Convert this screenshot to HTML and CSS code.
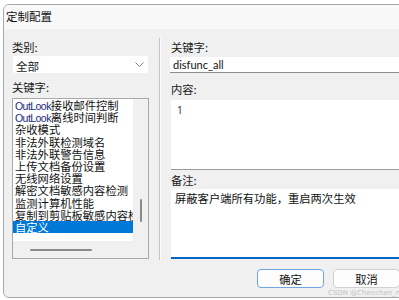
FILE: index.html
```html
<!DOCTYPE html>
<html lang="zh-CN">
<head>
<meta charset="utf-8">
<title>定制配置</title>
<link rel="stylesheet" href="styles.css">
</head>
<body>
<div class="window">
  <div class="titlebar">定制配置</div>
  <div class="main">
    <div class="left">
      <div class="label lbl-type">类别:</div>
      <div class="combo">
        <span>全部</span>
        <svg class="chev" width="9" height="5" viewBox="0 0 9 5"><path d="M0.5 0.5 L4.5 4.5 L8.5 0.5" fill="none" stroke="#7a7a7a" stroke-width="1"/></svg>
      </div>
      <div class="label lbl-key">关键字:</div>
      <div class="listbox">
        <div class="list-row">
          <ul class="items">
            <li><span class="lat">OutLook</span>接收邮件控制</li>
            <li><span class="lat">OutLook</span>离线时间判断</li>
            <li>杂收模式</li>
            <li>非法外联检测域名</li>
            <li>非法外联警告信息</li>
            <li>上传文档备份设置</li>
            <li>无线网络设置</li>
            <li>解密文档敏感内容检测</li>
            <li>监测计算机性能</li>
            <li>复制到剪贴板敏感内容检测</li>
            <li class="sel">自定义</li>
          </ul>
          <div class="vscroll"><div class="vthumb"></div></div>
        </div>
        <div class="hscroll"><div class="hthumb"></div></div>
      </div>
    </div>
    <div class="divider"></div>
    <div class="right">
      <div class="label lbl-type">关键字:</div>
      <div class="input">disfunc_all</div>
      <div class="label lbl-content">内容:</div>
      <div class="textarea content-box">1</div>
      <div class="label lbl-note">备注:</div>
      <div class="textarea note-box">屏蔽客户端所有功能，重启两次生效</div>
    </div>
  </div>
  <div class="buttons">
    <div class="btn default">确定</div>
    <div class="btn">取消</div>
  </div>
  <div class="watermark">CSDN @Chenchen_n</div>
</div>
</body>
</html>
```
FILE: styles.css
```css
html, body {
  margin: 0;
  padding: 0;
  background: #ffffff;
  overflow: hidden;
  width: 399px;
  height: 300px;
}
body {
  font-family: "Noto Sans", "Noto Sans CJK SC", sans-serif;
  font-size: 11.3px;
  color: #1a1a1a;
}
.window {
  position: relative;
  margin: 4px 0 0 3px;
  width: 430px;
  height: 294px;
  border: 1px solid #a8a8a8;
  border-radius: 6px 0 0 6px;
  background: #f0f0f0;
  box-sizing: border-box;
  overflow: hidden;
}
.titlebar {
  height: 24px;
  line-height: 22px;
  padding-left: 2px;
  background: #f8f8f8;
  color: #111;
  font-family: "Noto Sans CJK SC", sans-serif;
  font-size: 11.5px;
}
.main {
  display: flex;
  padding-left: 8px;
  height: 232px;
}
.left {
  width: 137px;
  display: flex;
  flex-direction: column;
}
.label {
  height: 14px;
  line-height: 14px;
  font-family: "Noto Sans CJK SC", sans-serif;
}
.lbl-type { margin-top: 11px; }
.combo {
  margin-top: 2px;
  height: 17px;
  margin-left: 1px;
  width: 135px;
  background: #ffffff;
  border-radius: 2px;
  display: flex;
  align-items: center;
  justify-content: space-between;
  padding: 0 3px 0 3px;
  box-sizing: border-box;
  font-family: "Noto Sans CJK SC", sans-serif;
  font-size: 11.5px;
}
.combo span { padding-top: 2px; }
.chev { margin-right: 1px; }
.lbl-key { margin-top: 7px; }
.listbox {
  margin-top: 4px;
  height: 161px;
  border: 1px solid #a9a9a9;
  box-sizing: border-box;
  display: flex;
  flex-direction: column;
  background: #f0f0f0;
}
.list-row {
  display: flex;
  height: 142px;
}
.items {
  list-style: none;
  margin: 0;
  padding: 0;
  width: 120px;
  flex: none;
  background: #ffffff;
  overflow: hidden;
}
.items li {
  height: 12.2px;
  line-height: 12.2px;
  padding-left: 2px;
  white-space: nowrap;
  overflow: hidden;
  font-family: "Noto Sans CJK SC", sans-serif;
  font-size: 11.3px;
  color: #111;
}
.items li .lat {
  font-family: "Liberation Sans", sans-serif;
  font-size: 10.5px;
  letter-spacing: -0.55px;
  color: #222a7a;
}
.items li.sel {
  background: #0078d7;
  color: #ffffff;
}
.vscroll {
  width: 15px;
  flex: none;
  display: flex;
  justify-content: center;
}
.vthumb {
  margin-top: 100px;
  width: 2px;
  height: 23px;
  border-radius: 1px;
  background: #8a8a8a;
}
.hscroll {
  flex: 1;
  display: flex;
  align-items: center;
  padding-left: 17px;
}
.hthumb {
  width: 62px;
  height: 2px;
  border-radius: 1px;
  background: #8a8a8a;
}
.divider {
  margin-left: 10px;
  margin-top: 9px;
  width: 1px;
  height: 222px;
  background: #c4c4c4;
  border-right: 1px solid #fbfbfb;
}
.right {
  margin-left: 9px;
  flex: 1;
  display: flex;
  flex-direction: column;
}
.right .label { padding-left: 1px; }
.input {
  margin-top: 3px;
  height: 16px;
  background: #ffffff;
  border-bottom: 1px solid #8d8d8d;
  box-sizing: border-box;
  padding-left: 3px;
  line-height: 15px;
  font-family: "Lato", "Noto Sans", sans-serif;
  font-size: 11px;
  color: #111;
}
.lbl-content { margin-top: 9px; }
.textarea {
  background: #ffffff;
  box-sizing: border-box;
  margin-left: 1px;
}
.content-box {
  margin-top: 4px;
  height: 70px;
  border-bottom: 1px solid #9a9a9a;
  padding: 3px 0 0 6px;
  line-height: 14px;
  font-family: "Noto Sans", sans-serif;
  font-size: 10px;
  color: #333;
}
.lbl-note { margin-top: 3px; }
.note-box {
  margin-top: 2px;
  height: 70px;
  border-bottom: 2px solid #0067c0;
  padding: 1px 0 0 4px;
  line-height: 16px;
  font-family: "Noto Sans CJK SC", sans-serif;
  font-size: 11.3px;
  color: #111;
}
.buttons {
  display: flex;
  gap: 9px;
  padding-left: 253px;
  margin-top: 8px;
}
.btn {
  width: 67px;
  height: 19px;
  box-sizing: border-box;
  border: 1px solid #d0d0d0;
  border-radius: 4px;
  background: #fdfdfd;
  display: flex;
  align-items: center;
  justify-content: center;
  font-family: "Noto Sans CJK SC", sans-serif;
  font-size: 11.3px;
  color: #111;
}
.btn.default {
  border-color: #6fa6dc;
}
.watermark {
  position: absolute;
  left: 324px;
  top: 284px;
  font-family: "DejaVu Sans", sans-serif;
  font-size: 7px;
  color: #c4c4c4;
  white-space: nowrap;
}
```
